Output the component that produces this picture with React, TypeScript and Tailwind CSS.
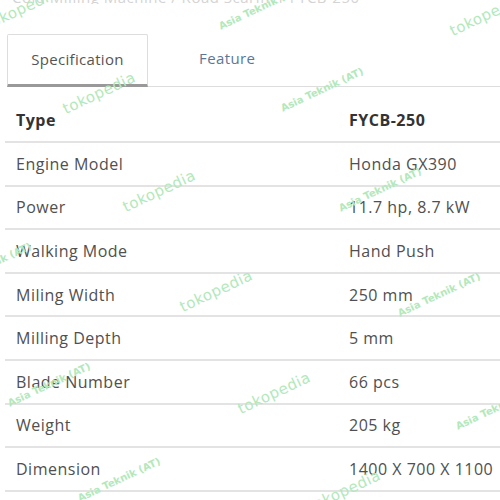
import React from 'react';

const specs = [
  ['Engine Model', 'Honda GX390'],
  ['Power', '11.7 hp, 8.7 kW'],
  ['Walking Mode', 'Hand Push'],
  ['Miling Width', '250 mm'],
  ['Milling Depth', '5 mm'],
  ['Blade Number', '66 pcs'],
  ['Weight', '205 kg'],
  ['Dimension', '1400 X 700 X 1100'],
];

// watermark stamps scattered over the screenshot
const marks: { text: string; x: number; y: number; big?: boolean }[] = [
  { text: 'tokopedia', x: -18, y: -2, big: true },
  { text: 'Asia Teknik (AT)', x: 215, y: 0 },
  { text: 'tokopedia', x: 447, y: 4, big: true },
  { text: 'tokopedia', x: 60, y: 82, big: true },
  { text: 'Asia Teknik (AT)', x: 277, y: 82 },
  { text: 'tokopedia', x: 120, y: 180, big: true },
  { text: 'Asia Teknik (AT)', x: 335, y: 182 },
  { text: 'Asia Teknik (AT)', x: -55, y: 257 },
  { text: 'tokopedia', x: 177, y: 280, big: true },
  { text: 'Asia Teknik (AT)', x: 394, y: 287 },
  { text: 'Asia Teknik (AT)', x: 4, y: 377 },
  { text: 'tokopedia', x: 235, y: 382, big: true },
  { text: 'Asia Teknik (AT)', x: 452, y: 400 },
  { text: 'Asia Teknik (AT)', x: 74, y: 472 },
  { text: 'tokopedia', x: 305, y: 480, big: true },
];

export default function App() {
  return (
    <div className="relative w-[500px] h-[500px] overflow-hidden bg-white font-['Open_Sans',sans-serif]">
      <div className="h-[4px] overflow-hidden">
        <div className="-mt-[14px] pl-[12px] text-[15px] text-[#d4d4d4] tracking-[0.5px]">
          Cold Milling Machine / Road Scarifier FYCB-250
        </div>
      </div>

      <div className="flex items-end mt-[30px] pl-[7px]">
        <div className="w-[141px] h-[53px] flex items-center justify-center border border-[#ddd] border-b-[3px] border-b-[#999] rounded-t-[2px] text-[15px] text-[#555] tracking-[0.3px]">
          Specification
        </div>
        <div className="flex-1 h-[53px] border-b border-[#ddd] flex items-center pl-[51px] pb-[3px]">
          <span className="text-[15px] text-[#5b7796] tracking-[0.4px]">Feature</span>
        </div>
      </div>

      <div className="pl-[5px] pt-[11px]">
        <table className="w-[560px] border-collapse text-[16px] tracking-[0.5px]">
          <tbody>
            <tr className="border-b-2 border-[#e3e3e3]">
              <td className="w-[344px] h-[44px] pl-[11px] font-bold text-[#333]">Type</td>
              <td className="font-bold text-[#333]">FYCB-250</td>
            </tr>
            {specs.map(([label, value]) => (
              <tr key={label} className="border-b-2 border-[#e3e3e3]">
                <td className="h-[43.6px] pl-[11px] text-[#505050]">{label}</td>
                <td className="text-[#505050] whitespace-nowrap">{value}</td>
              </tr>
            ))}
          </tbody>
        </table>
      </div>

      {marks.map((m, i) => (
        <div
          key={i}
          className={`absolute -rotate-[25deg] whitespace-nowrap pointer-events-none text-[#b3e8bb] font-['DejaVu_Sans',sans-serif] ${
            m.big ? 'text-[15px] tracking-[0.5px]' : 'text-[10px] font-bold'
          }`}
          style={{ left: m.x, top: m.y }}
        >
          {m.text}
        </div>
      ))}
    </div>
  );
}
